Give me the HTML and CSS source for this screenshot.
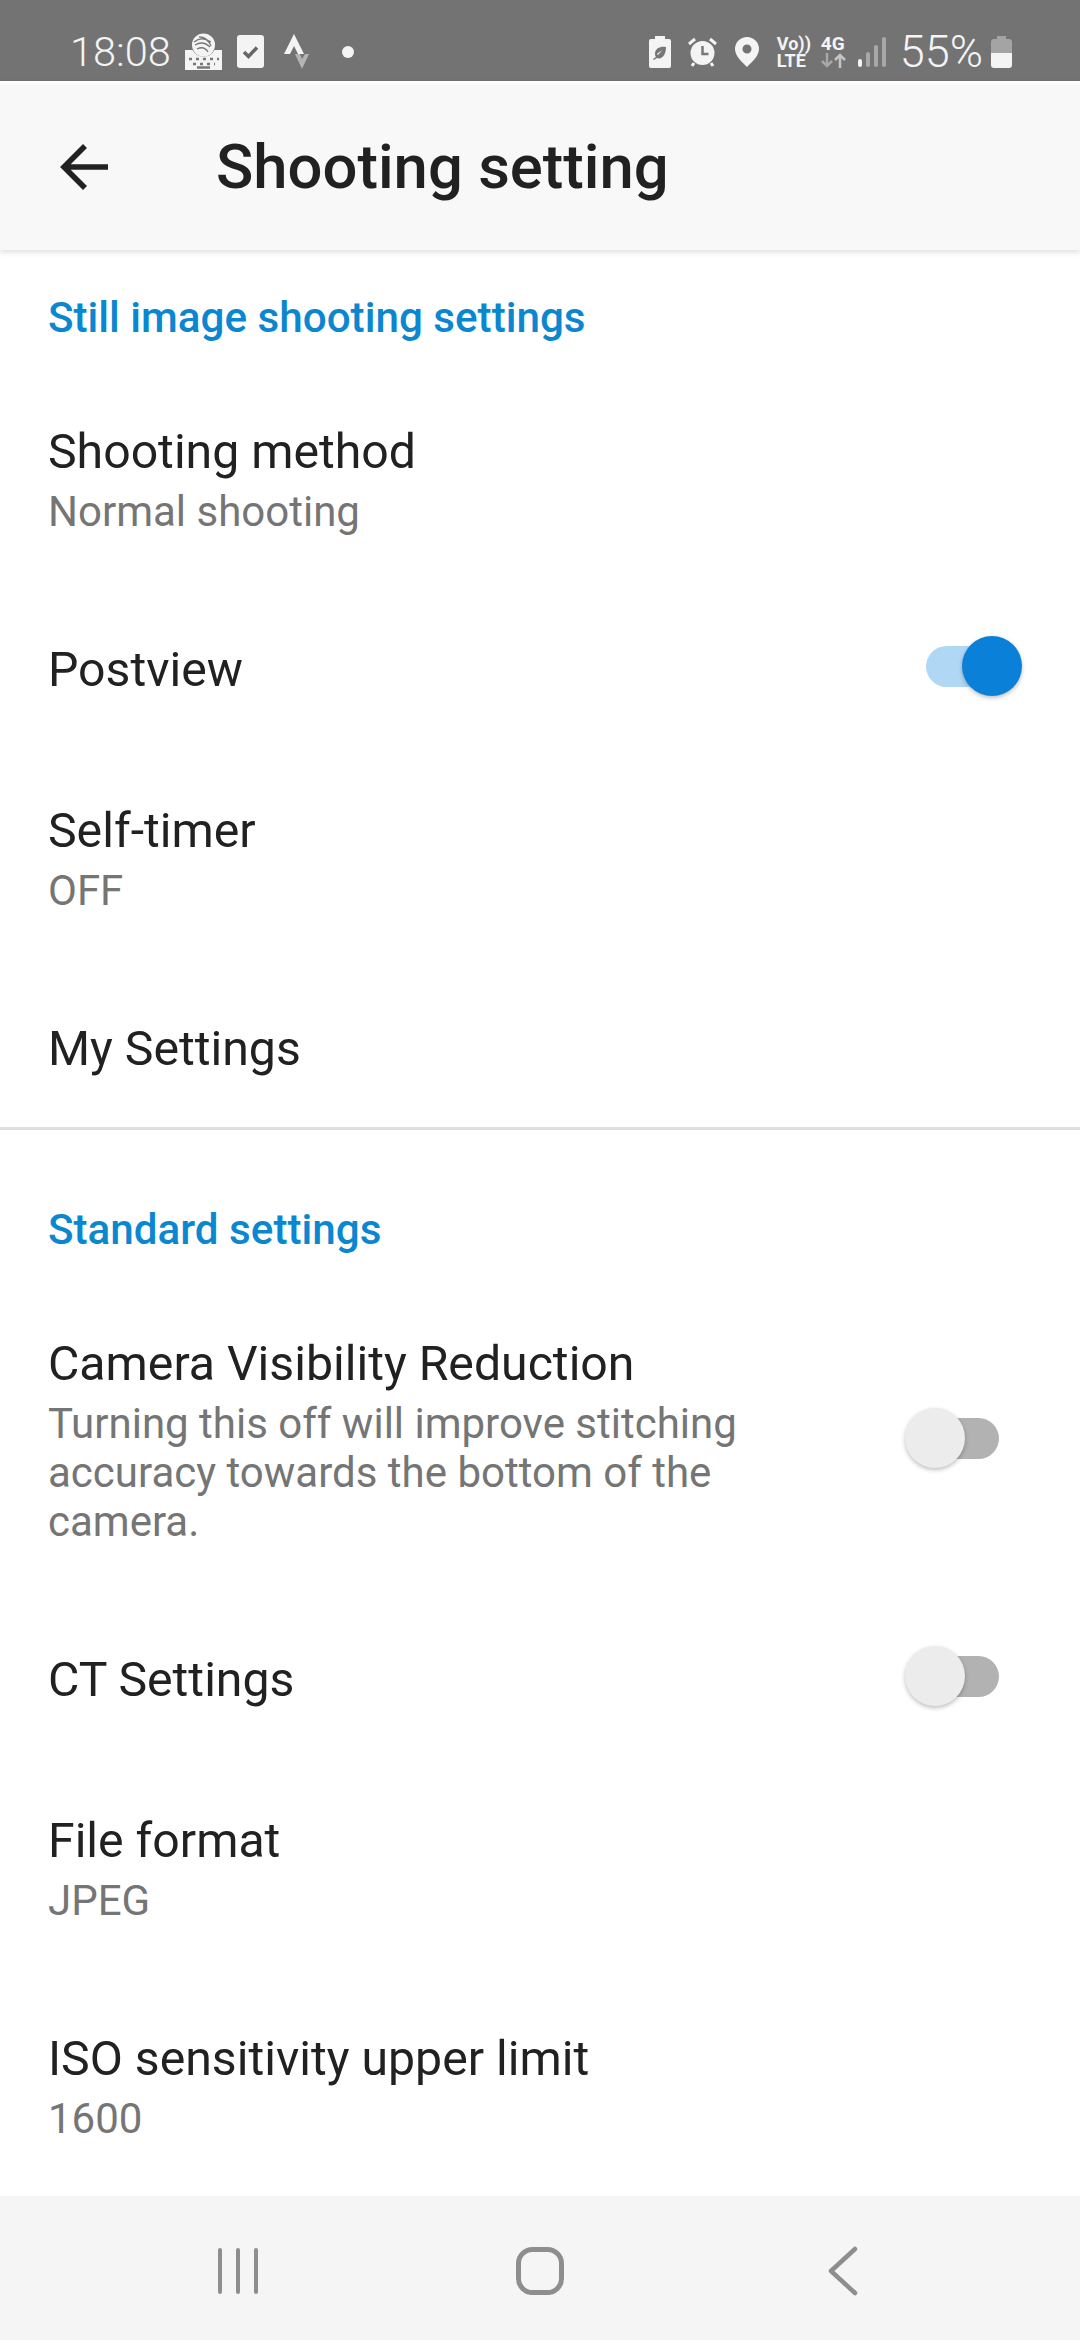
FILE: index.html
```html
<!DOCTYPE html>
<html lang="en">
<head>
<meta charset="utf-8">
<title>Shooting setting</title>
<link rel="stylesheet" href="styles.css">
</head>
<body>
<div class="phone">
  <header class="status">
    <span class="time">18:08</span>
    <svg class="ic ic-kb" width="37" height="37" viewBox="0 0 37 37">
      <path fill="#f4f4f4" d="M0 17h7.500a12.500 12.500 0 0 0 22 0H37v20H0z"/>
      <circle cx="18.500" cy="12" r="11.500" fill="#f4f4f4"/>
      <path fill="none" stroke="#777" stroke-width="1.300" d="M9 9c5-4 11-4 17 0M10 12c5-3 10-3 15 2M12 16c4-2 8-2 11 3M14 4c5 0 9 2 12 9"/>
      <path fill="none" stroke="#777" stroke-width="2.500" stroke-dasharray="3 4" d="M4 26h30M8 31h22"/>
      <path stroke="#777" stroke-width="2.500" d="M12 34.500h13"/>
    </svg>
    <svg class="ic ic-check" width="27" height="33" viewBox="0 0 27 33">
      <rect width="27" height="33" rx="3" fill="#f4f4f4"/>
      <path fill="none" stroke="#666" stroke-width="3.500" d="M7 17l4.500 4.500L20 12.500"/>
    </svg>
    <svg class="ic ic-strava" width="25" height="35" viewBox="0 0 25 35">
      <path fill="#f4f4f4" d="M10 0l10 20h-6l-4-8-4 8H0z"/>
      <path fill="#b4b4b4" d="M11 20h5l2 5 3-5h4l-7 15z"/>
    </svg>
    <i class="dot"></i>
    <div class="status-right">
      <svg class="ic ic-eco" width="22" height="32" viewBox="0 0 22 32">
        <path fill="#f4f4f4" d="M6 0h10v3h4a2 2 0 0 1 2 2v25a2 2 0 0 1-2 2H2a2 2 0 0 1-2-2V5a2 2 0 0 1 2-2h4z"/>
        <path fill="#777" d="M17 11c-6-1-10 1-11 6 0 2 0 3 1 4l-3 2 1 1 3-2c5 2 9-3 9-11zm-3 3c-2 1-3 3-5 5l-1-1c2-2 4-3 6-4z"/>
      </svg>
      <svg class="ic ic-alarm" width="29" height="30" viewBox="0 0 29 30">
        <circle cx="14.500" cy="16" r="12" fill="#f4f4f4"/>
        <path fill="none" stroke="#f4f4f4" stroke-width="3" d="M1 7l6-5M28 7l-6-5M6 26l-2 3M23 26l2 3"/>
        <path fill="none" stroke="#777" stroke-width="2.500" d="M14.500 9v8h6"/>
      </svg>
      <svg class="ic ic-pin" width="24" height="30" viewBox="0 0 24 30">
        <path fill="#f4f4f4" fill-rule="evenodd" d="M12 0a12 12 0 0 1 12 12c0 7-7 13-12 18C7 25 0 19 0 12A12 12 0 0 1 12 0zm0 7.500a4.500 4.500 0 1 0 0 9 4.500 4.500 0 0 0 0-9z"/>
      </svg>
      <div class="volte"><span>Vo))</span><span>LTE</span></div>
      <div class="net">
        <span>4G</span>
        <svg width="25" height="15" viewBox="0 0 25 15">
          <path fill="none" stroke="#a8a8a8" stroke-width="2.500" d="M6 0v13M1 8l5 5 5-5"/>
          <path fill="none" stroke="#c4c4c4" stroke-width="2.500" d="M19 15V2M14 7l5-5 5 5"/>
        </svg>
      </div>
      <svg class="ic ic-signal" width="28" height="30" viewBox="0 0 28 30">
        <rect x="0" y="22" width="4" height="8" rx="2" fill="#f4f4f4"/>
        <rect x="8" y="15" width="4" height="15" rx="2" fill="#a8a8a8"/>
        <rect x="16" y="8" width="4" height="22" rx="2" fill="#a8a8a8"/>
        <rect x="24" y="0" width="4" height="30" rx="2" fill="#a8a8a8"/>
      </svg>
      <span class="pct">55%</span>
      <svg class="ic ic-batt" width="21" height="32" viewBox="0 0 21 32">
        <path fill="#a4a4a4" d="M6 0h9v3h3a3 3 0 0 1 3 3v11H0V6a3 3 0 0 1 3-3h3z"/>
        <path fill="#f4f4f4" d="M0 17h21v12a3 3 0 0 1-3 3H3a3 3 0 0 1-3-3z"/>
      </svg>
    </div>
  </header>

  <div class="appbar">
    <svg class="back" width="48" height="46" viewBox="0 0 48 46">
      <path fill="none" stroke="#212121" stroke-width="5.600" d="M48 23H5M25 2L4 23l21 21"/>
    </svg>
    <h1 class="title">Shooting setting</h1>
  </div>

  <main class="list">
    <section class="group first">
      <h2 class="head">Still image shooting settings</h2>
      <div class="row"><div class="body"><div class="name">Shooting method</div><div class="sub">Normal shooting</div></div></div>
      <div class="row"><div class="body"><div class="name">Postview</div></div><div class="toggle on"><i class="thumb"></i></div></div>
      <div class="row"><div class="body"><div class="name">Self-timer</div><div class="sub">OFF</div></div></div>
      <div class="row"><div class="body"><div class="name">My Settings</div></div></div>
    </section>
    <section class="group">
      <h2 class="head">Standard settings</h2>
      <div class="row"><div class="body narrow"><div class="name">Camera Visibility Reduction</div><div class="sub">Turning this off will improve stitching accuracy towards the bottom of the camera.</div></div><div class="toggle"><i class="thumb"></i></div></div>
      <div class="row"><div class="body"><div class="name">CT Settings</div></div><div class="toggle"><i class="thumb"></i></div></div>
      <div class="row"><div class="body"><div class="name">File format</div><div class="sub">JPEG</div></div></div>
      <div class="row"><div class="body"><div class="name">ISO sensitivity upper limit</div><div class="sub">1600</div></div></div>
    </section>
  </main>

  <nav class="navbar">
    <svg width="44" height="46" viewBox="0 0 44 46"><path stroke="#8e8e8e" stroke-width="4" stroke-linecap="round" fill="none" d="M4 2v42M22 2v42M40 2v42"/></svg>
    <svg class="home" width="48" height="48" viewBox="0 0 48 48"><rect x="2.500" y="2.500" width="43" height="43" rx="14" fill="none" stroke="#8e8e8e" stroke-width="5"/></svg>
    <svg width="30" height="50" viewBox="0 0 30 50"><path stroke="#8e8e8e" stroke-width="4.500" stroke-linecap="round" stroke-linejoin="round" fill="none" d="M27 3L3 25l24 22"/></svg>
  </nav>
</div>
</body>
</html>
```

FILE: styles.css
```css
* { box-sizing: border-box; }
html, body { margin: 0; padding: 0; background: #fff; }
.phone {
  width: 1080px;
  height: 2340px;
  display: flex;
  flex-direction: column;
  overflow: hidden;
  font-family: Roboto, "Liberation Sans", sans-serif;
  color: #212121;
}
.status {
  height: 81px;
  flex: none;
  background: #737373;
  color: #f4f4f4;
  display: flex;
  align-items: center;
  padding: 22px 68px 0 70px;
}
.time { font-size: 41.500px; font-weight: 300; width: 99px; white-space: nowrap; }
.ic { display: block; flex: none; }
.ic-kb { margin-left: 16px; }
.ic-check { margin-left: 15px; }
.ic-strava { margin-left: 20px; }
.dot { width: 12px; height: 12px; border-radius: 50%; background: #f4f4f4; margin-left: 33px; }
.status-right { margin-left: auto; display: flex; align-items: center; }
.ic-alarm { margin-left: 17px; }
.ic-pin { margin-left: 18px; }
.volte {
  margin-left: 18px;
  width: 32px;
  display: flex;
  flex-direction: column;
  font-size: 18px;
  font-weight: 700;
  line-height: 17px;
  white-space: nowrap;
}
.net {
  margin-left: 12px;
  width: 25px;
  display: flex;
  flex-direction: column;
  font-size: 19px;
  font-weight: 700;
  line-height: 16px;
}
.net svg { display: block; margin-top: 1px; }
.ic-signal { margin-left: 12px; }
.pct { margin-left: 14px; font-size: 45px; font-weight: 300; white-space: nowrap; }
.ic-batt { margin-left: 8px; }

.appbar {
  height: 169px;
  flex: none;
  background: #f8f8f8;
  display: flex;
  align-items: center;
  padding-left: 60px;
  border-top: 3px solid #fff;
  box-shadow: 0 2px 6px rgba(0, 0, 0, .14);
  position: relative;
}
.back { display: block; flex: none; }
.title {
  margin: 0 0 0 108px;
  font-size: 61.600px;
  font-weight: 500;
  line-height: 66px;
  color: #212121;
}
.list { flex: 1; min-height: 0; overflow: hidden; background: #fff; }
.group { padding-top: 32px; border-bottom: 3px solid #dedede; }
.group.first { padding-top: 0; }
.group:last-child { border-bottom: 0; }
.head {
  margin: 0;
  padding: 41px 48px 27px;
  font-size: 42.200px;
  font-weight: 500;
  line-height: 54px;
  color: #0b87d0;
}
.row {
  display: flex;
  align-items: center;
  justify-content: space-between;
  padding: 50px 48px 51px;
}
.first .row:last-child { padding-bottom: 48px; }
.body { min-width: 0; }
.body.narrow { width: 730px; }
.name { font-size: 48.200px; line-height: 60px; }
.sub { margin: 5px 0 3px; font-size: 42px; line-height: 49px; color: #757575; }
.toggle {
  position: relative;
  flex: none;
  width: 79px;
  height: 41px;
  margin: -7px 33px 0 0;
  border-radius: 21px;
  background: #b2b2b2;
}
.toggle .thumb {
  position: absolute;
  left: -15px;
  top: -10px;
  width: 60px;
  height: 60px;
  border-radius: 50%;
  background: #ececec;
  box-shadow: 0 2px 4px rgba(0, 0, 0, .25);
}
.toggle.on { background: #b0d7f3; margin-right: 27px; }
.toggle.on .thumb { left: auto; right: -17px; background: #0a80d8; }

.navbar {
  height: 144px;
  flex: none;
  background: #f5f5f5;
  display: flex;
  align-items: center;
  padding: 6px 222px 0 216px;
  justify-content: space-between;
}
.navbar svg { display: block; }
.navbar .home { margin-right: 8px; }
```
